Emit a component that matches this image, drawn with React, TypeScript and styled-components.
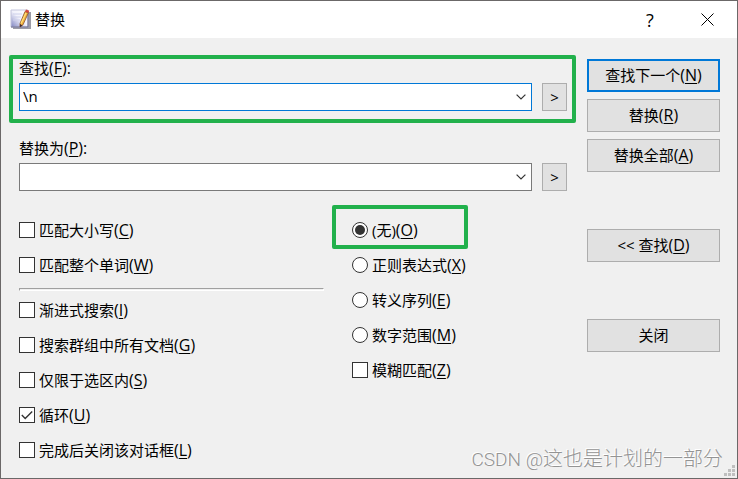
import React, { useState } from "react";
import styled, { createGlobalStyle, css } from "styled-components";

const GlobalStyle = createGlobalStyle`
  *, *::before, *::after { box-sizing: border-box; }
  body {
    margin: 0;
    background: #f0f0f0;
    color: #000;
    font: 15px/20px "Open Sans", "Noto Sans CJK SC", sans-serif;
  }
  button, input { font: inherit; color: inherit; }
`;

const Dialog = styled.main`
  position: relative;
  display: flex;
  flex-direction: column;
  min-height: 100vh;
  border: 1px solid #6b6868;
  background: #f0f0f0;
`;

const TitleBar = styled.header`
  display: flex;
  align-items: center;
  height: 37px;
  padding: 0 20px 0 9px;
  background: #fff;
`;

const Title = styled.h1`
  flex: 1;
  margin: 0 0 0 4px;
  padding-bottom: 2px;
  font-size: 15px;
  font-weight: 400;
  line-height: 20px;
`;

const CaptionButton = styled.button`
  display: flex;
  align-items: center;
  justify-content: center;
  width: 20px;
  height: 24px;
  margin-left: 37px;
  padding: 0;
  border: 0;
  background: none;
  font-size: 18px;
`;

const Body = styled.form`
  display: grid;
  grid-template-columns: minmax(0, 1fr) 133px;
  gap: 20px;
  flex: 1;
  padding: 21px 17px 17px 18px;
`;

const Fields = styled.div`
  display: flex;
  flex-direction: column;
  gap: 28px;
`;

const highlight = css<{ $marked?: boolean }>`
  ${(p) =>
    p.$marked &&
    css`
      &::after {
        content: "";
        position: absolute;
        border: 4px solid #22b14c;
        border-radius: 2px;
        pointer-events: none;
      }
    `}
`;

const Field = styled.div<{ $marked?: boolean }>`
  position: relative;
  display: flex;
  flex-direction: column;
  gap: 6px;
  line-height: 18px;
  ${highlight}
  &::after { inset: -4px -9px -12px -10px; }
`;

const FieldLine = styled.div`
  display: flex;
  align-items: center;
  gap: 10px;
`;

const Combo = styled.div<{ $active?: boolean }>`
  display: flex;
  flex: 1;
  height: 28px;
  border: 1px solid ${(p) => (p.$active ? "#0078d7" : "#7a7a7a")};
  background: #fff;
`;

const ComboInput = styled.input`
  flex: 1;
  min-width: 0;
  padding: 0 3px 2px;
  border: 0;
  outline: 0;
  background: transparent;
`;

const ComboArrow = styled.button`
  display: flex;
  align-items: center;
  justify-content: center;
  width: 20px;
  padding: 0;
  border: 0;
  background: none;
`;

const PushButton = styled.button<{ $primary?: boolean }>`
  width: 100%;
  height: 33px;
  padding: 0 0 2px;
  border: ${(p) => (p.$primary ? "2px solid #0078d7" : "1px solid #adadad")};
  background: #e1e1e1;
`;

const MoreButton = styled(PushButton)`
  width: 25px;
  height: 28px;
  padding: 0;
`;

const Actions = styled.div`
  display: flex;
  flex-direction: column;
  gap: 57px;
`;

const ActionGroup = styled.div`
  display: flex;
  flex-direction: column;
  gap: 7px;
`;

const Options = styled.div`
  display: grid;
  grid-template-columns: 305fr 215fr;
  gap: 28px;
  margin-top: 29px;
`;

const OptionColumn = styled.div``;

const OptionList = styled.div`
  display: flex;
  flex-direction: column;
  align-items: flex-start;
  gap: 15px;
`;

const Separator = styled.hr`
  height: 3px;
  margin: 13px 0 9px;
  border: 1px solid;
  border-color: #a0a0a0 #fff #fff #a0a0a0;
`;

const Option = styled.label<{ $marked?: boolean }>`
  position: relative;
  display: flex;
  align-items: center;
  gap: 4px;
  height: 20px;
  white-space: nowrap;
  ${highlight}
  &::after { inset: -15px -50px -9px -20px; }
`;

const Mark = styled.span`
  display: grid;
  width: 16px;
  height: 16px;
  > * { grid-area: 1 / 1; }
`;

const Toggle = styled.input`
  appearance: none;
  width: 16px;
  height: 16px;
  margin: 0;
  border: 1px solid #333;
  border-radius: ${(p) => (p.type === "radio" ? "50%" : "0")};
  background: #fff;
  & + svg { visibility: hidden; pointer-events: none; }
  &:checked + svg { visibility: visible; }
`;

const Shortcut = styled.span`
  font-size: 16px;
`;

const Key = styled.span`
  text-decoration: underline;
  text-decoration-thickness: 1px;
  text-underline-offset: 2px;
`;

const Watermark = styled.div`
  position: absolute;
  right: 14px;
  bottom: 4px;
  color: #949494;
  font: 300 20px/28px Roboto, "Noto Sans CJK SC", sans-serif;
  text-shadow: -1px -1px 0 #fff;
  pointer-events: none;
`;

const Brand = styled.span`
  font-size: 19px;
`;

const Grip = styled.svg`
  position: absolute;
  right: 2px;
  bottom: 2px;
`;

function Caption({ text, k, colon }: { text: string; k: string; colon?: boolean }) {
  return (
    <span>
      {text}
      <Shortcut>
        (<Key>{k}</Key>){colon && ":"}
      </Shortcut>
    </span>
  );
}

function NotepadIcon() {
  return (
    <svg width="21" height="21" viewBox="0 0 21 21" aria-hidden="true">
      <defs>
        <linearGradient id="sheet" x1="1" y1="0" x2="0" y2="1">
          <stop offset="0" stopColor="#fff" />
          <stop offset=".5" stopColor="#f1f1fb" />
          <stop offset="1" stopColor="#7d82c0" />
        </linearGradient>
      </defs>
      <path d="M3 3h18v17H3z" fill="#9c9ca6" />
      <path d="M1 1h17v17H1z" fill="url(#sheet)" stroke="#c3c5dc" />
      <path d="M1 18h17V3" fill="none" stroke="#69698a" />
      <path d="M3 5h9M3 8h8M3 11h7" stroke="#cdd0ea" />
      <path d="M15 2.5l3.4 1.3-5.4 12-3 2.2v-3.5z" fill="#f3b13c" stroke="#85502b" strokeWidth=".8" />
      <path d="M16 4l-5 10.5" stroke="#ffe17b" strokeWidth="1.2" />
      <path d="M15 2.4L16 .4l3.3 1.4-.9 2.3z" fill="#d5473c" />
      <path d="M10 15v3l2.4-1.6z" fill="#3c2730" />
    </svg>
  );
}

function FindField(props: { id: string; text: string; k: string; initial: string; marked?: boolean }) {
  const [value, setValue] = useState(props.initial);
  return (
    <Field $marked={props.marked}>
      <label htmlFor={props.id}>
        <Caption text={props.text} k={props.k} colon />
      </label>
      <FieldLine>
        <Combo $active={props.marked}>
          <ComboInput id={props.id} value={value} onChange={(e) => setValue(e.target.value)} />
          <ComboArrow type="button" aria-label="展开列表">
            <svg width="10" height="6" viewBox="0 0 10 6" fill="none" stroke="#333" strokeWidth="1.2">
              <path d="M.6.6L5 5 9.4.6" />
            </svg>
          </ComboArrow>
        </Combo>
        <MoreButton type="button">&gt;</MoreButton>
      </FieldLine>
    </Field>
  );
}

function Check({ text, k, checked }: { text: string; k: string; checked?: boolean }) {
  return (
    <Option>
      <Mark>
        <Toggle type="checkbox" defaultChecked={checked} />
        <svg width="16" height="16" viewBox="0 0 16 16" fill="none" stroke="#333" strokeWidth="1.4">
          <path d="M2.8 8l3.4 3.4 7-7" />
        </svg>
      </Mark>
      <Caption text={text} k={k} />
    </Option>
  );
}

function Radio({ text, k, checked, marked }: { text: string; k: string; checked?: boolean; marked?: boolean }) {
  return (
    <Option $marked={marked}>
      <Mark>
        <Toggle type="radio" name="mode" defaultChecked={checked} />
        <svg width="16" height="16" viewBox="0 0 16 16">
          <circle cx="8" cy="8" r="5" fill="#333" />
        </svg>
      </Mark>
      <Caption text={text} k={k} />
    </Option>
  );
}

export default function App() {
  return (
    <>
      <GlobalStyle />
      <Dialog>
        <TitleBar>
          <NotepadIcon />
          <Title>替换</Title>
          <CaptionButton type="button" aria-label="帮助">?</CaptionButton>
          <CaptionButton type="button" aria-label="关闭窗口">
            <svg width="13" height="13" viewBox="0 0 13 13" stroke="#000">
              <path d="M.5.5l12 12M12.5.5l-12 12" />
            </svg>
          </CaptionButton>
        </TitleBar>
        <Body onSubmit={(e) => e.preventDefault()}>
          <div>
            <Fields>
              <FindField id="find" text="查找" k="F" initial="\n" marked />
              <FindField id="replace" text="替换为" k="P" initial="" />
            </Fields>
            <Options>
              <OptionColumn>
                <OptionList>
                  <Check text="匹配大小写" k="C" />
                  <Check text="匹配整个单词" k="W" />
                </OptionList>
                <Separator />
                <OptionList>
                  <Check text="渐进式搜索" k="I" />
                  <Check text="搜索群组中所有文档" k="G" />
                  <Check text="仅限于选区内" k="S" />
                  <Check text="循环" k="U" checked />
                  <Check text="完成后关闭该对话框" k="L" />
                </OptionList>
              </OptionColumn>
              <OptionList>
                <Radio text="(无)" k="O" checked marked />
                <Radio text="正则表达式" k="X" />
                <Radio text="转义序列" k="E" />
                <Radio text="数字范围" k="M" />
                <Check text="模糊匹配" k="Z" />
              </OptionList>
            </Options>
          </div>
          <Actions>
            <ActionGroup>
              <PushButton type="submit" $primary><Caption text="查找下一个" k="N" /></PushButton>
              <PushButton type="button"><Caption text="替换" k="R" /></PushButton>
              <PushButton type="button"><Caption text="替换全部" k="A" /></PushButton>
            </ActionGroup>
            <PushButton type="button"><Caption text="<< 查找" k="D" /></PushButton>
            <PushButton type="button">关闭</PushButton>
          </Actions>
        </Body>
        <Watermark><Brand>CSDN @</Brand>这也是计划的一部分</Watermark>
        <Grip width="11" height="11" viewBox="0 0 11 11" fill="#bfbfbf" aria-hidden="true">
          <path d="M8 0h3v3H8zM4 4h3v3H4zM8 4h3v3H8zM0 8h3v3H0zM4 8h3v3H4zM8 8h3v3H8z" />
        </Grip>
      </Dialog>
    </>
  );
}
